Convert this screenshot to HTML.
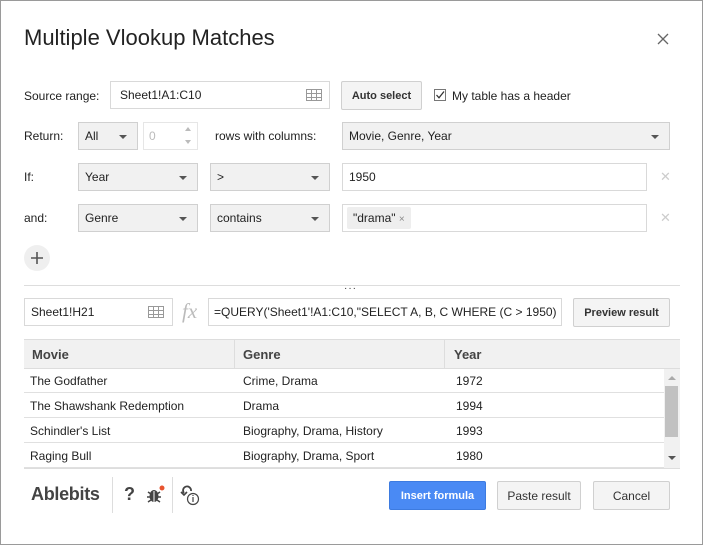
<!DOCTYPE html><html><head><style>
*{box-sizing:border-box;margin:0;padding:0}
body{width:704px;height:545px;background:#fff;font-family:"Liberation Sans",sans-serif;font-size:12px;color:#222;position:relative;overflow:hidden}
.a{position:absolute}
.frame{left:0;top:0;width:703px;height:545px;border:1px solid #9a9a9a}
.inp{position:absolute;border:1px solid #d9d9d9;background:#fff;padding-left:9px;display:flex;align-items:center;height:28px}
.sel{position:absolute;border:1px solid #d0d0d0;background:#f1f1f1;padding-left:6px;display:flex;align-items:center;height:28px}
.sel:after{content:"";position:absolute;right:10px;top:12px;border-left:4px solid transparent;border-right:4px solid transparent;border-top:4px solid #555}
.btn{position:absolute;border:1px solid #d0d0d0;background:#f4f4f4;display:flex;align-items:center;justify-content:center;height:29px;font-weight:bold;font-size:11px;color:#333;border-radius:2px}
.lbl{position:absolute}
.x{position:absolute;color:#ccc;font-size:13px}
.row{position:absolute;left:24px;width:640px;height:25px;border-bottom:1px solid #e0e0e0}
.row span{position:absolute;top:6px}
.grid{position:absolute;width:16px;height:12px;border:1px solid #999;background:linear-gradient(#999,#999) 0 3px/100% 1px no-repeat,linear-gradient(#999,#999) 0 7px/100% 1px no-repeat,linear-gradient(90deg,#999,#999) 4px 0/1px 100% no-repeat,linear-gradient(90deg,#999,#999) 9px 0/1px 100% no-repeat}
</style></head><body>
<div class="a frame"></div>
<div class="a" style="left:24px;top:25px;font-size:22px;color:#222">Multiple Vlookup Matches</div>
<svg class="a" style="left:657px;top:33px" width="12" height="12"><path d="M1 1L11 11M11 1L1 11" stroke="#666" stroke-width="1.3"/></svg>

<div class="lbl" style="left:24px;top:89px">Source range:</div>
<div class="inp" style="left:110px;top:81px;width:220px">Sheet1!A1:C10</div>
<div class="grid" style="left:306px;top:89px"></div>
<div class="btn" style="left:341px;top:81px;width:81px">Auto select</div>
<div class="a" style="left:434px;top:89px;width:12px;height:12px;border:1px solid #777;background:#fff"></div>
<svg class="a" style="left:435px;top:90px" width="10" height="10"><path d="M1.5 5L4 7.8L9 1.5" stroke="#333" stroke-width="1.3" fill="none"/></svg>
<div class="lbl" style="left:452px;top:89px">My table has a header</div>

<div class="lbl" style="left:24px;top:129px">Return:</div>
<div class="sel" style="left:78px;top:122px;width:60px">All</div>
<div class="inp" style="left:143px;top:122px;width:55px;color:#bbb;padding-left:5px;border-color:#e6e6e6">0</div>
<div class="a" style="left:185px;top:127px;border-left:3px solid transparent;border-right:3px solid transparent;border-bottom:4px solid #bbb"></div>
<div class="a" style="left:185px;top:140px;border-left:3px solid transparent;border-right:3px solid transparent;border-top:4px solid #bbb"></div>
<div class="lbl" style="left:215px;top:129px">rows with columns:</div>
<div class="sel" style="left:342px;top:122px;width:328px">Movie, Genre, Year</div>

<div class="lbl" style="left:24px;top:170px">If:</div>
<div class="sel" style="left:78px;top:163px;width:120px">Year</div>
<div class="sel" style="left:210px;top:163px;width:120px">&gt;</div>
<div class="inp" style="left:342px;top:163px;width:305px;padding-left:6px">1950</div>
<div class="x" style="left:660px;top:169px">✕</div>

<div class="lbl" style="left:24px;top:211px">and:</div>
<div class="sel" style="left:78px;top:204px;width:120px">Genre</div>
<div class="sel" style="left:210px;top:204px;width:120px">contains</div>
<div class="inp" style="left:342px;top:204px;width:305px;padding-left:4px"><span style="background:#eee;padding:4px 6px;border-radius:2px">"drama" <span style="color:#888;font-size:10px">×</span></span></div>
<div class="x" style="left:660px;top:210px">✕</div>

<div class="a" style="left:24px;top:245px;width:26px;height:26px;border-radius:50%;background:#efefef"></div>
<svg class="a" style="left:31px;top:252px" width="12" height="12"><path d="M6 0V12M0 6H12" stroke="#555" stroke-width="1.6"/></svg>

<div class="a" style="left:24px;top:285px;width:656px;height:1px;background:#ddd"></div>
<div class="a" style="left:344px;top:283px;font-size:10px;color:#333;letter-spacing:1px">···</div>

<div class="inp" style="left:24px;top:298px;width:149px;padding-left:6px">Sheet1!H21</div>
<div class="grid" style="left:148px;top:306px"></div>
<div class="a" style="left:182px;top:299px;font-family:'Liberation Serif',serif;font-style:italic;font-size:21px;color:#bbb">fx</div>
<div class="inp" style="left:208px;top:298px;width:354px;padding-left:5px;overflow:hidden;white-space:nowrap">=QUERY('Sheet1'!A1:C10,"SELECT A, B, C WHERE (C &gt; 1950)</div>
<div class="btn" style="left:573px;top:298px;width:97px">Preview result</div>

<div class="a" style="left:24px;top:339px;width:656px;height:30px;background:#f1f1f1;border-top:1px solid #ddd;border-bottom:1px solid #ddd;font-weight:bold;font-size:13px;color:#444">
<span class="a" style="left:8px;top:7px">Movie</span>
<span class="a" style="left:210px;top:0;width:1px;height:28px;background:#ddd"></span>
<span class="a" style="left:219px;top:7px">Genre</span>
<span class="a" style="left:420px;top:0;width:1px;height:28px;background:#ddd"></span>
<span class="a" style="left:430px;top:7px">Year</span></div>
<div class="row" style="top:368px"><span style="left:6px">The Godfather</span><span style="left:219px">Crime, Drama</span><span style="left:432px">1972</span></div>
<div class="row" style="top:393px"><span style="left:6px">The Shawshank Redemption</span><span style="left:219px">Drama</span><span style="left:432px">1994</span></div>
<div class="row" style="top:418px"><span style="left:6px">Schindler's List</span><span style="left:219px">Biography, Drama, History</span><span style="left:432px">1993</span></div>
<div class="row" style="top:443px"><span style="left:6px">Raging Bull</span><span style="left:219px">Biography, Drama, Sport</span><span style="left:432px">1980</span></div>
<div class="a" style="left:664px;top:369px;width:16px;height:99px;background:#f1f1f1"></div>
<div class="a" style="left:665px;top:386px;width:13px;height:51px;background:#c1c1c1"></div>
<div class="a" style="left:668px;top:376px;border-left:4px solid transparent;border-right:4px solid transparent;border-bottom:4px solid #aaa"></div>
<div class="a" style="left:668px;top:456px;border-left:4px solid transparent;border-right:4px solid transparent;border-top:4px solid #555"></div>
<div class="a" style="left:24px;top:468px;width:656px;height:1px;background:#ddd"></div>

<div class="a" style="left:31px;top:484px;font-size:18px;font-weight:bold;color:#444;letter-spacing:-0.3px">Ablebits</div>
<div class="a" style="left:112px;top:477px;width:1px;height:36px;background:#ddd"></div>
<div class="a" style="left:124px;top:484px;font-size:18px;font-weight:bold;color:#444">?</div>
<svg class="a" style="left:146px;top:485px" width="20" height="20"><ellipse cx="8" cy="11" rx="4.5" ry="6" fill="#444"/><path d="M2 7l3 2M14 7l-3 2M1 12h3M15 12h-3M2 17l3-2M14 17l-3-2" stroke="#444" stroke-width="1.5"/><line x1="8" y1="6" x2="8" y2="17" stroke="#fff" stroke-width="1"/><circle cx="16" cy="3" r="2.5" fill="#e8542f"/></svg>
<div class="a" style="left:172px;top:477px;width:1px;height:36px;background:#ddd"></div>
<svg class="a" style="left:179px;top:483px" width="24" height="24"><path d="M5 10a4 4 0 1 1 7 -2" stroke="#444" stroke-width="1.8" fill="none"/><path d="M2 9l3 3 3-3" stroke="#444" stroke-width="1.6" fill="none"/><circle cx="14" cy="16" r="5.5" stroke="#444" stroke-width="1.2" fill="#fff"/><path d="M14 14v5M14 12v1" stroke="#444" stroke-width="1.2"/></svg>

<div class="btn" style="left:389px;top:481px;width:97px;background:#4a8af4;border-color:#3d7be0;color:#fff">Insert formula</div>
<div class="btn" style="left:497px;top:481px;width:84px;font-weight:normal;font-size:12px">Paste result</div>
<div class="btn" style="left:593px;top:481px;width:77px;font-weight:normal;font-size:12px">Cancel</div>
</body></html>
